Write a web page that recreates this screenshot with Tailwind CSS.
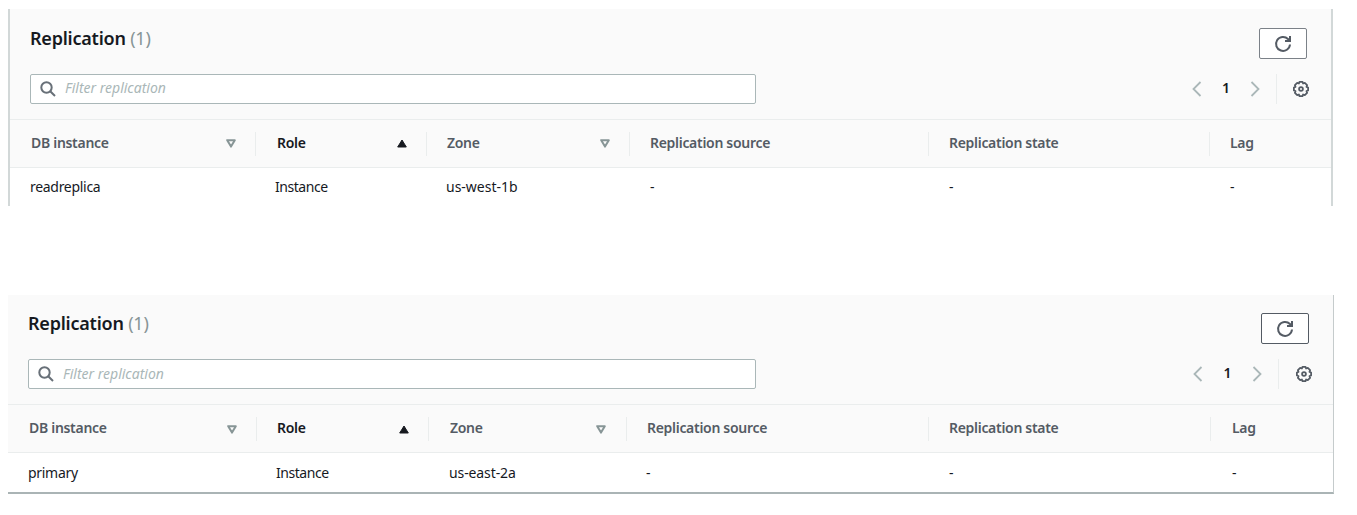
<!DOCTYPE html>
<html lang="en">
<head>
<meta charset="utf-8">
<title>Replication</title>
<script src="https://cdn.jsdelivr.net/npm/@tailwindcss/browser@4"></script>
</head>
<body class="bg-white font-['Noto_Sans',sans-serif] text-[14px] leading-5 text-[#16191f] w-[1357px] h-[515px] overflow-hidden whitespace-nowrap">
<svg class="hidden">
  <symbol id="search" viewBox="0 0 16 16"><g fill="none" stroke="#687078" stroke-width="2"><circle cx="6.5" cy="6.5" r="5.2"/><path d="M10.2 10.2 15 15"/></g></symbol>
  <symbol id="refresh" viewBox="0 0 18 18"><g fill="none" stroke="#545b64" stroke-width="2"><path d="M16 9.500a7 7 0 1 1-2-5.500l1.500 1.500"/><path d="M16 1v5h-5"/></g></symbol>
  <symbol id="left" viewBox="0 0 10 16"><path d="M8.500 1 1.500 8l7 7" fill="none" stroke="#aab7b8" stroke-width="1.800"/></symbol>
  <symbol id="right" viewBox="0 0 10 16"><path d="m1.500 1 7 7-7 7" fill="none" stroke="#aab7b8" stroke-width="1.800"/></symbol>
  <symbol id="gear" viewBox="0 0 16 16"><g fill="none" stroke="#545b64" stroke-width="1.800" stroke-linejoin="round"><path d="M6.500.9h3l.6 1.600 1.700-.6L14.100 4.200l-.6 1.700 1.600.6v3l-1.600.6.6 1.700-2.300 2.300-1.700-.6-.6 1.600h-3l-.6-1.600-1.700.6-2.300-2.300.6-1.700L.9 9.500v-3l1.600-.6-.6-1.700L4.200 1.900l1.700.6z"/><circle cx="8" cy="8" r="1.900"/></g></symbol>
  <symbol id="down" viewBox="0 0 10 9"><path d="M1.200 1.200h7.600L5 7.600z" fill="none" stroke="#879596" stroke-width="2" stroke-linejoin="round"/></symbol>
  <symbol id="up" viewBox="0 0 10 9"><path d="M5 1 9.300 8H.7z" fill="#16191f" stroke="#16191f" stroke-linejoin="round"/></symbol>
</svg>

<section class="mt-[9px] ml-2 w-[1325px] h-[197px] border-x-2 border-[#d2d8d8] bg-[#fafafa]">
  <div class="h-[65px] flex justify-between pl-5 pr-6">
    <h2 class="pt-[17px] text-[18px] leading-6 font-semibold tracking-[-0.22px]">Replication <span class="font-normal text-[#879596]">(1)</span></h2>
    <button class="mt-[19px] w-12 h-[31px] border border-[#7b8188] rounded-xs bg-white flex items-center justify-center"><svg class="size-[18px]"><use href="#refresh"/></svg></button>
  </div>
  <div class="h-[46px] flex items-start pl-5 border-b border-[#eaeded]">
    <div class="w-[726px] h-[30px] border border-[#aab7b8] rounded-xs bg-white flex items-center pl-[9px]"><svg class="size-4"><use href="#search"/></svg><span class="pl-[9px] pb-[2px] italic text-[#aab7b8]">Filter replication</span></div>
    <div class="ml-auto h-[30px] flex items-center">
      <svg class="w-2.5 h-4"><use href="#left"/></svg>
      <span class="w-[48px] pb-[3px] text-center text-[14px] font-semibold">1</span>
      <svg class="w-2.5 h-4"><use href="#right"/></svg>
      <i class="ml-4 w-px h-[30px] bg-[#eaeded]"></i>
      <svg class="ml-4 mr-[22px] size-4"><use href="#gear"/></svg>
    </div>
  </div>
  <div class="h-12 flex items-center border-b border-[#eaeded] font-semibold tracking-[-0.3px] text-[#545b64]">
    <div class="w-[246px] h-6 flex items-center border-r border-[#eaeded] pl-[21px] pr-[19px]"><span class="pb-px">DB instance</span><svg class="ml-auto w-2.5 h-[9px]"><use href="#down"/></svg></div>
    <div class="w-[171px] h-6 flex items-center border-r border-[#eaeded] pl-[21px] pr-[19px] text-[#16191f]"><span class="pb-px">Role</span><svg class="ml-auto w-2.5 h-[9px]"><use href="#up"/></svg></div>
    <div class="w-[203px] h-6 flex items-center border-r border-[#eaeded] pl-5 pr-[19px]"><span class="pb-px">Zone</span><svg class="ml-auto w-2.5 h-[9px]"><use href="#down"/></svg></div>
    <div class="w-[299px] h-6 flex items-center border-r border-[#eaeded] pl-5"><span class="pb-px">Replication source</span></div>
    <div class="w-[281px] h-6 flex items-center border-r border-[#eaeded] pl-5"><span class="pb-px">Replication state</span></div>
    <div class="pl-5 pb-px">Lag</div>
  </div>
  <div class="h-[38px] flex items-center bg-white pb-px">
    <div class="w-[246px] pl-5 tracking-[-0.3px]">readreplica</div>
    <div class="w-[171px] pl-[19px] tracking-[-0.45px]">Instance</div>
    <div class="w-[203px] pl-[19px]">us-west-1b</div>
    <div class="w-[299px] pl-5">-</div>
    <div class="w-[281px] pl-5">-</div>
    <div class="pl-5">-</div>
  </div>
</section>

<section class="mt-[89px] ml-2 w-[1326px] h-[199px] border-r border-b-2 border-r-[#c5cbcc] border-b-[#aab4b5] bg-[#fafafa]">
  <div class="h-[64px] flex justify-between pl-5 pr-6">
    <h2 class="pt-[16px] text-[18px] leading-6 font-semibold tracking-[-0.22px]">Replication <span class="font-normal text-[#879596]">(1)</span></h2>
    <button class="mt-[18px] w-12 h-[31px] border border-[#545b64] rounded-xs bg-white flex items-center justify-center"><svg class="size-[18px]"><use href="#refresh"/></svg></button>
  </div>
  <div class="h-[46px] flex items-start pl-5 border-b border-[#eaeded]">
    <div class="w-[728px] h-[30px] border border-[#aab7b8] rounded-xs bg-white flex items-center pl-[9px]"><svg class="size-4"><use href="#search"/></svg><span class="pl-[9px] pb-px italic text-[#aab7b8]">Filter replication</span></div>
    <div class="ml-auto h-[30px] flex items-center">
      <svg class="w-2.5 h-4"><use href="#left"/></svg>
      <span class="w-[49px] pb-[3px] text-center text-[14px] font-semibold">1</span>
      <svg class="w-2.5 h-4"><use href="#right"/></svg>
      <i class="ml-4 w-px h-[30px] bg-[#eaeded]"></i>
      <svg class="ml-[17px] mr-[21px] size-4"><use href="#gear"/></svg>
    </div>
  </div>
  <div class="h-12 flex items-center border-b border-[#eaeded] font-semibold tracking-[-0.3px] text-[#545b64]">
    <div class="w-[249px] h-6 flex items-center border-r border-[#eaeded] pl-[21px] pr-[19px]"><span class="pb-px">DB instance</span><svg class="ml-auto mt-px w-2.5 h-[9px]"><use href="#down"/></svg></div>
    <div class="w-[172px] h-6 flex items-center border-r border-[#eaeded] pl-5 pr-[19px] text-[#16191f]"><span class="pb-px">Role</span><svg class="ml-auto mt-px w-2.5 h-[9px]"><use href="#up"/></svg></div>
    <div class="w-[198px] h-6 flex items-center border-r border-[#eaeded] pl-[21px] pr-5"><span class="pb-px">Zone</span><svg class="ml-auto mt-px w-2.5 h-[9px]"><use href="#down"/></svg></div>
    <div class="w-[302px] h-6 flex items-center border-r border-[#eaeded] pl-5"><span class="pb-px">Replication source</span></div>
    <div class="w-[282px] h-6 flex items-center border-r border-[#eaeded] pl-5"><span class="pb-px">Replication state</span></div>
    <div class="pl-[21px] pb-px">Lag</div>
  </div>
  <div class="h-[39px] flex items-center bg-white">
    <div class="w-[249px] pl-5 tracking-[-0.3px]">primary</div>
    <div class="w-[172px] pl-[19px] tracking-[-0.45px]">Instance</div>
    <div class="w-[198px] pl-5 tracking-[-0.1px]">us-east-2a</div>
    <div class="w-[302px] pl-[19px]">-</div>
    <div class="w-[282px] pl-5">-</div>
    <div class="pl-[21px]">-</div>
  </div>
</section>
</body>
</html>
